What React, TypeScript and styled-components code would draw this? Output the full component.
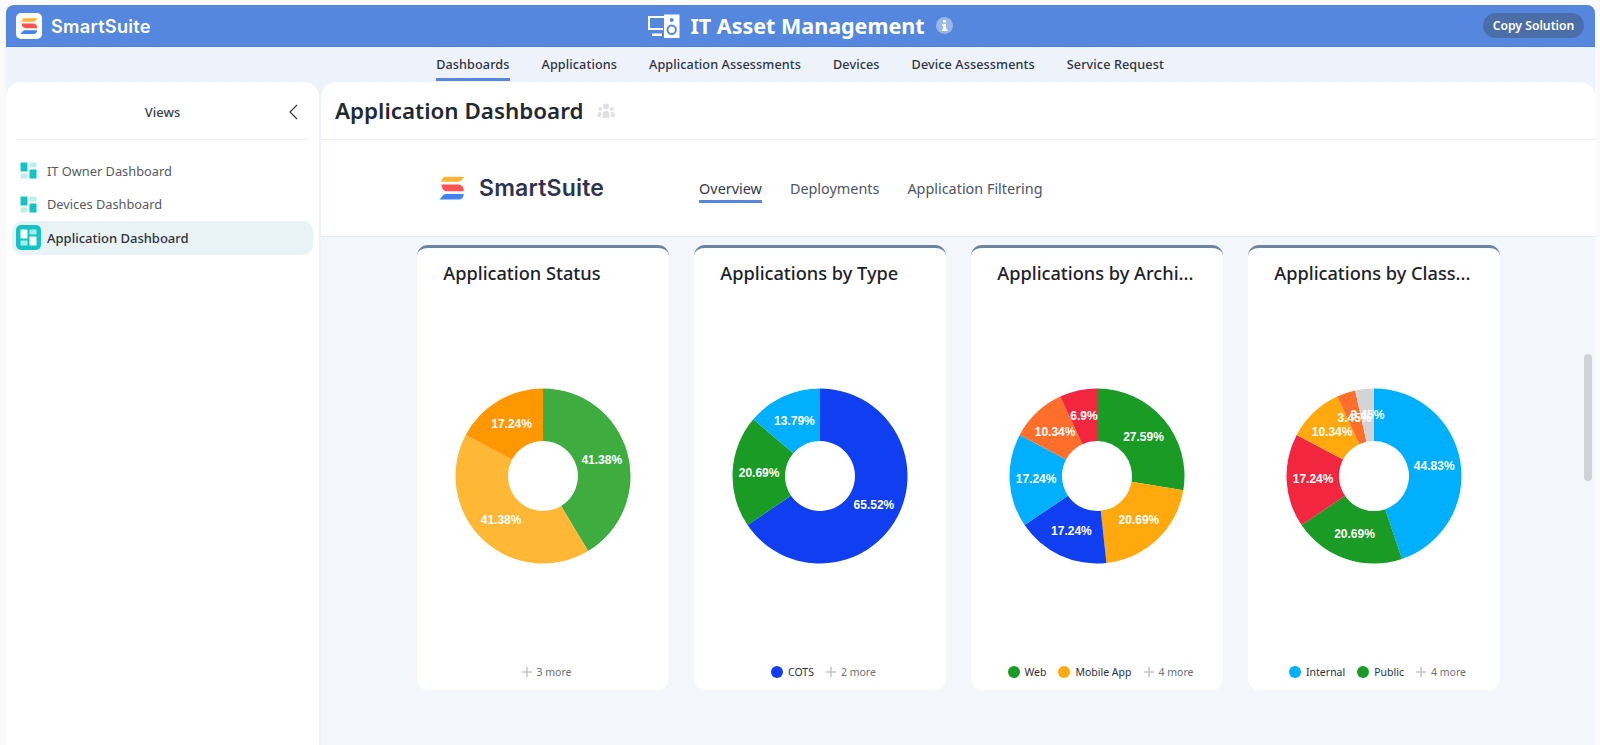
import React from 'react';
import styled, { createGlobalStyle } from 'styled-components';

const Global = createGlobalStyle`
  html, body { margin: 0; padding: 0; height: 745px; overflow: hidden; background: #fafafa; }
  * { box-sizing: border-box; }
  body { font-family: "Noto Sans", "Open Sans", sans-serif; }
`;

const Page = styled.div`
  height: 745px;
  padding: 5px 5px 0 6px;
  display: flex;
  flex-direction: column;
  position: relative;
  overflow: hidden;
`;
const Header = styled.header`
  height: 42px;
  flex: none;
  display: grid;
  grid-template-columns: 1fr auto 1fr;
  align-items: center;
  background: #5587de;
  border-bottom: 1px solid #3f7fe6;
  border-radius: 8px 8px 0 0;
  padding: 0 11px 0 10px;
`;
const Brand = styled.div`
  display: flex;
  align-items: center;
  gap: 9px;
`;
const LogoBox = styled.div`
  width: 26px;
  height: 26px;
  border-radius: 5px;
  background: #fff;
  display: flex;
  align-items: center;
  justify-content: center;
`;
const BrandName = styled.span`
  font-family: Inter, sans-serif;
  font-weight: 600;
  font-size: 18.2px;
  color: #fff;
  letter-spacing: 0.25px;
`;
const TitleWrap = styled.div`
  display: flex;
  align-items: center;
  color: #fff;
`;
const Title = styled.h1`
  margin: 0 11px 0 10px;
  font-size: 21.5px;
  font-weight: 700;
  line-height: 30px;
  color: #fff;
  white-space: nowrap;
`;
const Info = styled.span`
  width: 17px;
  height: 17px;
  border-radius: 50%;
  background: #9ab7ea;
  display: flex;
  align-items: center;
  justify-content: center;
`;
const CopyButton = styled.button`
  justify-self: end;
  border: 0;
  height: 25px;
  width: 101px;
  padding: 0;
  border-radius: 13px;
  background: #4b6ea8;
  color: #fff;
  font-family: inherit;
  font-size: 12.2px;
  font-weight: 600;
`;
const SubNav = styled.nav`
  height: 35px;
  flex: none;
  background: #edf2fb;
  display: flex;
  justify-content: center;
  gap: 32px;
  padding-right: 1px;
`;
const NavItem = styled.a<{ $active?: boolean }>`
  height: 34px;
  display: flex;
  align-items: center;
  font-size: 12.65px;
  font-weight: 500;
  color: #2d3340;
  letter-spacing: 0.1px;
  white-space: nowrap;
  border-bottom: 3px solid ${p => (p.$active ? '#5587de' : 'transparent')};
  padding-top: 3px;
`;
const Body = styled.div`
  flex: 1;
  display: flex;
  gap: 2px;
  background: #edf2fb;
  min-height: 0;
`;
const Sidebar = styled.aside`
  width: 313px;
  flex: none;
  background: #fff;
  border-radius: 15px 15px 0 0;
  padding: 0 6px;
`;
const SideHead = styled.div`
  height: 58px;
  margin: 0 4px 0 4px;
  border-bottom: 1px solid #eceef1;
  display: flex;
  align-items: center;
  justify-content: space-between;
  position: relative;
  padding: 3px 11px 0 0;
`;
const SideTitle = styled.span`
  flex: 1;
  text-align: center;
  font-size: 13px;
  font-weight: 500;
  color: #3a3f47;
  padding-left: 20px;
`;
const SideList = styled.div`
  padding-top: 14px;
  display: flex;
  flex-direction: column;
  gap: 0;
`;
const SideRow = styled.div<{ $active?: boolean }>`
  height: 33.5px;
  display: flex;
  align-items: center;
  gap: 6px;
  padding-left: 4px;
  border-radius: 10px;
  background: ${p => (p.$active ? '#e9f2f4' : 'transparent')};
  color: ${p => (p.$active ? '#2f3338' : '#555a60')};
  font-size: ${p => (p.$active ? '13px' : '12.8px')};
  font-weight: ${p => (p.$active ? 500 : 400)};
`;
const IconSlot = styled.span<{ $active?: boolean }>`
  width: 25px;
  height: 25px;
  border-radius: 5px;
  display: flex;
  align-items: center;
  justify-content: center;
  background: ${p => (p.$active ? '#13c4c4' : 'transparent')};
`;
const Main = styled.main`
  flex: 1;
  min-width: 0;
  background: #f3f6fb;
  border-radius: 15px 15px 0 0;
  overflow: hidden;
  display: flex;
  flex-direction: column;
`;
const MainHead = styled.div`
  height: 58px;
  flex: none;
  background: #fff;
  border-bottom: 1px solid #eceef1;
  display: flex;
  align-items: center;
  gap: 14px;
  padding-left: 14px;
`;
const MainTitle = styled.h2`
  margin: 0;
  font-size: 22.4px;
  font-weight: 600;
  color: #1f2a30;
  white-space: nowrap;
`;
const BrandBar = styled.div`
  height: 97px;
  flex: none;
  background: #fff;
  border-bottom: 1px solid #e6e9ee;
  display: flex;
  align-items: center;
  padding: 0 0 0 118px;
`;
const BrandDark = styled.span`
  font-family: Inter, sans-serif;
  font-size: 23px;
  font-weight: 600;
  color: #2e3350;
  margin-left: 14px;
  letter-spacing: 0.2px;
`;
const Tabs = styled.div`
  display: flex;
  gap: 28px;
  margin-left: 95px;
`;
const Tab = styled.a<{ $active?: boolean }>`
  height: 30px;
  display: flex;
  align-items: center;
  padding-top: 4px;
  font-size: 14.4px;
  color: ${p => (p.$active ? '#2f3a4a' : '#4d5560')};
  border-bottom: 3px solid ${p => (p.$active ? '#5587de' : 'transparent')};
  white-space: nowrap;
`;
const Cards = styled.div`
  padding: 8px 0 0 1px;
  display: flex;
  justify-content: center;
  gap: 25.5px;
`;
const Card = styled.section`
  width: 251.5px;
  height: 445px;
  background: #fff;
  border-top: 3px solid #6b85a0;
  border-radius: 11px;
  display: flex;
  flex-direction: column;
`;
const CardTitle = styled.h3`
  margin: 0;
  padding: 12px 14px 0 26px;
  font-size: 18.2px;
  line-height: 26px;
  font-weight: 500;
  color: #1d2229;
  white-space: nowrap;
  overflow: hidden;
`;
const ChartArea = styled.div`
  flex: 1;
  display: flex;
  align-items: center;
  justify-content: center;
  padding-top: 12px;
`;
const Legend = styled.div`
  height: 36px;
  padding-left: 7px;
  display: flex;
  align-items: center;
  justify-content: center;
  gap: 12px;
  font-size: 10.5px;
  color: #2a3040;
`;
const LegendItem = styled.span`
  display: flex;
  align-items: center;
  gap: 5px;
`;
const Dot = styled.i<{ $c: string }>`
  width: 12px;
  height: 12px;
  border-radius: 50%;
  background: ${p => p.$c};
`;
const More = styled.span`
  display: flex;
  align-items: center;
  gap: 5px;
  color: #6b7078;
`;
const Scrollbar = styled.div`
  position: absolute;
  left: 1584px;
  top: 354px;
  width: 8px;
  height: 127px;
  border-radius: 4px;
  background: #d0d2d6;
`;
const SliceLabel = styled.text`
  font-family: "Liberation Sans", Arial, sans-serif;
  font-size: 12px;
  font-weight: 700;
  fill: #fff;
  text-anchor: middle;
  dominant-baseline: central;
`;

const StackLogo = ({ size }: { size: number }) => (
  <svg width={size} height={size} viewBox="0 0 24 24">
    <path d="M6 1.500H23.500L21 4.500C20 5.700 18.800 6.300 17.300 6.300H2.300C2.300 3.600 3.600 1.500 6 1.500Z" fill="#ffb438" />
    <path d="M2.300 8.700H17.500C20.800 8.700 22.800 11 22.800 14.200V15H7C4.200 15 2.300 12 2.300 8.700Z" fill="#ff5252" />
    <path d="M6.500 17.500H22.800C22.800 20.300 21 22.700 18 22.700H.5L3 19.500C4 18.300 5 17.500 6.500 17.500Z" fill="#3f84f0" />
  </svg>
);

const Board = ({ active }: { active?: boolean }) => {
  const strong = active ? '#fff' : '#13c4c4';
  const weak = active ? '#a8ecec' : '#bdeeee';
  return (
    <svg width="17" height="17" viewBox="0 0 17 17">
      <rect x="0.5" y="0.5" width="7" height="9" rx="0.5" fill={strong} />
      <rect x="9.5" y="0.5" width="7" height="5" rx="0.5" fill={weak} />
      <rect x="0.5" y="11.5" width="7" height="5" rx="0.5" fill={weak} />
      <rect x="9.5" y="7.5" width="7" height="9" rx="0.5" fill={strong} />
    </svg>
  );
};

const DeviceIcon = () => (
  <svg width="33" height="24" viewBox="0 0 33 24">
    <path fillRule="evenodd" d="M1 2h16v2H3v10h13v2H1V2z" fill="#fff" />
    <rect x="5" y="19.5" width="10" height="2.5" fill="#fff" />
    <path fillRule="evenodd" d="M17 .5h15.5V24H17V.5zm7.7 3.5a2 2 0 1 0 0 4 2 2 0 0 0 0-4zm0 6.5a5.2 5.2 0 1 0 0 10.4 5.2 5.2 0 0 0 0-10.4zm0 2a3.2 3.2 0 1 1 0 6.4 3.2 3.2 0 0 1 0-6.4z" fill="#fff" />
  </svg>
);

const TeamIcon = () => (
  <svg width="18" height="16" viewBox="0 0 18 16" fill="#dfe1e4">
    <circle cx="9" cy="3.5" r="3" />
    <circle cx="3.2" cy="6" r="2" />
    <circle cx="14.8" cy="6" r="2" />
    <path d="M5.5 15v-3.5C5.5 9 7 8 9 8s3.500 1 3.500 3.500V15z" />
    <path d="M.5 14v-2.500C.5 10 1.500 9 3 9c.8 0 1.300.2 1.600.5-.4.6-.6 1.300-.6 2V14zM17.500 14v-2.500C17.500 10 16.500 9 15 9c-.8 0-1.300.2-1.600.5.4.6.6 1.300.6 2V14z" />
  </svg>
);

const Plus = () => (
  <svg width="10" height="10" viewBox="0 0 10 10">
    <path d="M5 0v10M0 5h10" stroke="#c4c6cb" strokeWidth="1.6" />
  </svg>
);

type Slice = { v: number; c: string };

const polar = (r: number, frac: number) => {
  const a = frac * 2 * Math.PI;
  return [r * Math.sin(a), -r * Math.cos(a)];
};

const Donut = ({ slices }: { slices: Slice[] }) => {
  const R = 87.5;
  const r = 35;
  let acc = 0;
  const total = slices.reduce((s, x) => s + x.v, 0);
  return (
    <svg width="180" height="180" viewBox="-90 -90 180 180">
      {slices.map((s, i) => {
        const f0 = acc / total;
        acc += s.v;
        const f1 = acc / total;
        const [x0, y0] = polar(R, f0);
        const [x1, y1] = polar(R, f1);
        const [x2, y2] = polar(r, f1);
        const [x3, y3] = polar(r, f0);
        const large = f1 - f0 > 0.5 ? 1 : 0;
        return (
          <path
            key={i}
            fill={s.c}
            d={`M${x0} ${y0}A${R} ${R} 0 ${large} 1 ${x1} ${y1}L${x2} ${y2}A${r} ${r} 0 ${large} 0 ${x3} ${y3}Z`}
          />
        );
      })}
      {(() => {
        let a2 = 0;
        return slices.map((s, i) => {
          const mid = (a2 + s.v / 2) / total;
          a2 += s.v;
          const [x, y] = polar(61, mid);
          return (
            <SliceLabel key={i} x={x} y={y}>
              {s.v}%
            </SliceLabel>
          );
        });
      })()}
    </svg>
  );
};

const GREEN = '#199b26';
const AMBER = '#ffa90f';
const SKY = '#00b0ff';
const BLUE = '#0f3ff0';
const RED = '#f2263f';
const ORANGE = '#ff6f2b';

const cards = [
  {
    title: 'Application Status',
    slices: [
      { v: 41.38, c: '#3fac40' },
      { v: 41.38, c: '#ffb836' },
      { v: 17.24, c: '#ff9800' },
    ],
    legend: [] as { t: string; c: string }[],
    more: '3 more',
  },
  {
    title: 'Applications by Type',
    slices: [
      { v: 65.52, c: BLUE },
      { v: 20.69, c: GREEN },
      { v: 13.79, c: SKY },
    ],
    legend: [{ t: 'COTS', c: BLUE }],
    more: '2 more',
  },
  {
    title: 'Applications by Archi...',
    slices: [
      { v: 27.59, c: GREEN },
      { v: 20.69, c: AMBER },
      { v: 17.24, c: BLUE },
      { v: 17.24, c: SKY },
      { v: 10.34, c: ORANGE },
      { v: 6.9, c: RED },
    ],
    legend: [
      { t: 'Web', c: GREEN },
      { t: 'Mobile App', c: AMBER },
    ],
    more: '4 more',
  },
  {
    title: 'Applications by Class...',
    slices: [
      { v: 44.83, c: SKY },
      { v: 20.69, c: GREEN },
      { v: 17.24, c: RED },
      { v: 10.34, c: AMBER },
      { v: 3.45, c: ORANGE },
      { v: 3.45, c: '#d3d3d8' },
    ],
    legend: [
      { t: 'Internal', c: SKY },
      { t: 'Public', c: GREEN },
    ],
    more: '4 more',
  },
];

const navs = ['Dashboards', 'Applications', 'Application Assessments', 'Devices', 'Device Assessments', 'Service Request'];
const views = ['IT Owner Dashboard', 'Devices Dashboard', 'Application Dashboard'];

export default function App() {
  return (
    <Page>
      <Global />
      <Header>
        <Brand>
          <LogoBox>
            <StackLogo size={18} />
          </LogoBox>
          <BrandName>SmartSuite</BrandName>
        </Brand>
        <TitleWrap>
          <DeviceIcon />
          <Title>IT Asset Management</Title>
          <Info>
            <svg width="9" height="11" viewBox="0 0 9 11" fill="#fff">
              <rect x="3" y="0" width="3" height="2.6" />
              <path d="M2 4h4v5.200h1.500V11h-5.500V9.200h1.200V5.700H2z" />
            </svg>
          </Info>
        </TitleWrap>
        <CopyButton>Copy Solution</CopyButton>
      </Header>
      <SubNav>
        {navs.map((n, i) => (
          <NavItem key={n} $active={i === 0}>
            {n}
          </NavItem>
        ))}
      </SubNav>
      <Body>
        <Sidebar>
          <SideHead>
            <SideTitle>Views</SideTitle>
            <svg width="9" height="16" viewBox="0 0 9 16" fill="none">
              <path d="M8 1L1 8l7 7" stroke="#333" strokeWidth="1.1" />
            </svg>
          </SideHead>
          <SideList>
            {views.map((v, i) => (
              <SideRow key={v} $active={i === 2}>
                <IconSlot $active={i === 2}>
                  <Board active={i === 2} />
                </IconSlot>
                {v}
              </SideRow>
            ))}
          </SideList>
        </Sidebar>
        <Main>
          <MainHead>
            <MainTitle>Application Dashboard</MainTitle>
            <TeamIcon />
          </MainHead>
          <BrandBar>
            <StackLogo size={26} />
            <BrandDark>SmartSuite</BrandDark>
            <Tabs>
              <Tab $active>Overview</Tab>
              <Tab>Deployments</Tab>
              <Tab>Application Filtering</Tab>
            </Tabs>
          </BrandBar>
          <Cards>
            {cards.map(c => (
              <Card key={c.title}>
                <CardTitle>{c.title}</CardTitle>
                <ChartArea>
                  <Donut slices={c.slices} />
                </ChartArea>
                <Legend>
                  {c.legend.map(l => (
                    <LegendItem key={l.t}>
                      <Dot $c={l.c} />
                      {l.t}
                    </LegendItem>
                  ))}
                  <More>
                    <Plus />
                    {c.more}
                  </More>
                </Legend>
              </Card>
            ))}
          </Cards>
        </Main>
      </Body>
      <Scrollbar />
    </Page>
  );
}
